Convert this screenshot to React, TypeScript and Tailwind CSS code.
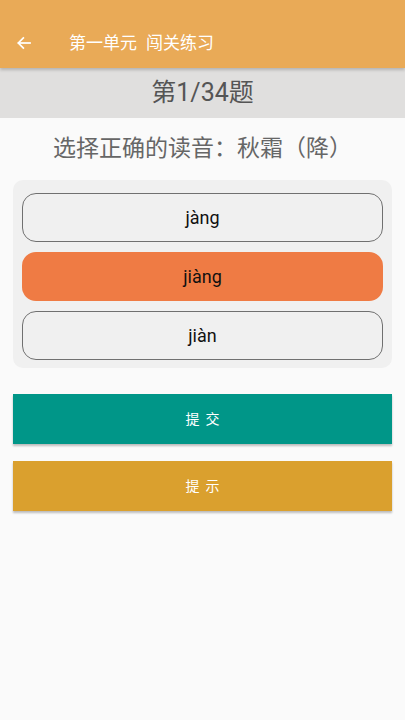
import React from "react";

const font = { fontFamily: '"Roboto", "Noto Sans CJK SC", sans-serif' };

export default function App() {
  return (
    <div className="w-[405px] h-[720px] bg-[#FAFAFA] flex flex-col" style={font}>
      <div className="h-[68px] bg-[#E9AA57] flex items-end pb-[14px] shadow-[0_2px_3px_rgba(0,0,0,0.2)] relative z-10">
        <div className="w-[48px] flex justify-center items-center h-[22px]">
          <svg width="16" height="16" viewBox="0 0 24 24" fill="none" stroke="#ffffff" strokeWidth="2.6" strokeLinecap="square">
            <path d="M21 12H4" />
            <path d="M11 4.5L3.5 12L11 19.5" />
          </svg>
        </div>
        <div className="ml-[21px] flex gap-[9px] text-white text-[17px] leading-[22px]">
          <span>第一单元</span>
          <span>闯关练习</span>
        </div>
      </div>
      <div className="h-[50px] bg-[#E0DFDE] flex items-center justify-center text-[25px] text-[#555555]">
        第1/34题
      </div>
      <div className="h-[62px] flex items-center justify-center text-[23px] text-[#666666]">
        选择正确的读音：秋霜（降）
      </div>
      <div className="mx-[13px] bg-[#F0F0F0] rounded-[10px] px-[9px] pt-[13px] pb-[8px] flex flex-col gap-[10px]">
        <div className="h-[49px] rounded-[14px] border-[1.5px] border-[#707070] flex items-center justify-center text-[18px] text-[#111111]">
          jàng
        </div>
        <div className="h-[49px] rounded-[14px] bg-[#EF7B44] flex items-center justify-center text-[18px] text-[#111111]">
          jiàng
        </div>
        <div className="h-[49px] rounded-[14px] border-[1.5px] border-[#707070] flex items-center justify-center text-[18px] text-[#111111]">
          jiàn
        </div>
      </div>
      <button className="mx-[13px] mt-[26px] h-[50px] bg-[#009688] text-white text-[14px] tracking-[6px] pl-[6px] shadow-[0_2px_2px_rgba(0,0,0,0.25)] flex items-center justify-center">
        提交
      </button>
      <button className="mx-[13px] mt-[17px] h-[50px] bg-[#DAA02E] text-white text-[14px] tracking-[6px] pl-[6px] shadow-[0_2px_2px_rgba(0,0,0,0.25)] flex items-center justify-center">
        提示
      </button>
    </div>
  );
}
